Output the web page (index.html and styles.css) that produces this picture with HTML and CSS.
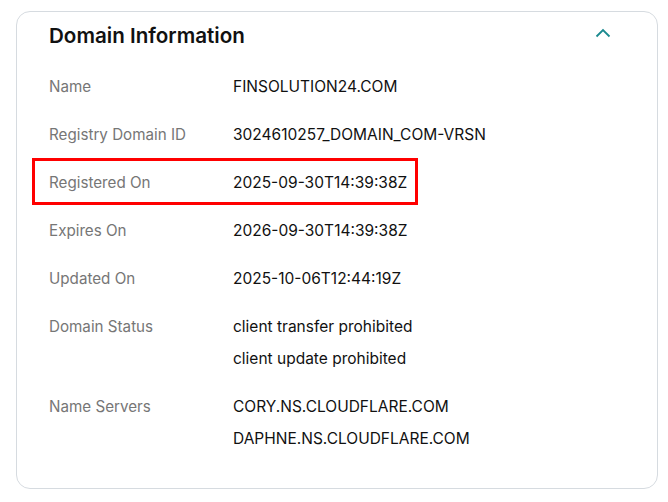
FILE: index.html
```html
<!DOCTYPE html>
<html>
<head>
<meta charset="utf-8">
<link rel="stylesheet" href="styles.css">
</head>
<body>
<div class="card">
  <div class="header">
    <h2 class="title">Domain Information</h2>
    <svg class="chev" width="16" height="10" viewBox="0 0 16 10"><path d="M1.5 8.5 L8 2 L14.5 8.5" fill="none" stroke="#1b8a8f" stroke-width="1.8"/></svg>
  </div>
  <div class="rows">
    <div class="row"><div class="label">Name</div><div class="vals"><div class="val">FINSOLUTION24.COM</div></div></div>
    <div class="row"><div class="label">Registry Domain ID</div><div class="vals"><div class="val">3024610257_DOMAIN_COM-VRSN</div></div></div>
    <div class="row hl"><div class="label">Registered On</div><div class="vals"><div class="val">2025-09-30T14:39:38Z</div></div></div>
    <div class="row"><div class="label">Expires On</div><div class="vals"><div class="val">2026-09-30T14:39:38Z</div></div></div>
    <div class="row"><div class="label">Updated On</div><div class="vals"><div class="val">2025-10-06T12:44:19Z</div></div></div>
    <div class="row"><div class="label">Domain Status</div><div class="vals"><div class="val">client transfer prohibited</div><div class="val">client update prohibited</div></div></div>
    <div class="row"><div class="label">Name Servers</div><div class="vals"><div class="val">CORY.NS.CLOUDFLARE.COM</div><div class="val">DAPHNE.NS.CLOUDFLARE.COM</div></div></div>
  </div>
</div>
</body>
</html>
```
FILE: styles.css
```css
html, body { margin: 0; padding: 0; background: #fff; }
body { font-family: Inter, "Liberation Sans", Arial, sans-serif; color: #111; }
.card {
  margin: 11px 10px 0 16px;
  height: 478px;
  box-sizing: border-box;
  border: 1px solid #d6dbe0;
  border-radius: 14px;
  padding: 0 0 0 15px;
}
.header {
  display: flex;
  align-items: center;
  justify-content: space-between;
  height: 46px;
  padding: 0 46px 0 17px;
}
.title { margin: 0; font-size: 20.6px; font-weight: 600; color: #111; }
.chev { display: block; margin-top: -4px; }
.rows { display: flex; flex-direction: column; gap: 10px; padding-top: 10px; }
.row {
  display: flex;
  width: 386px;
  box-sizing: border-box;
  padding: 0 0 0 14px;
  border: 3px solid transparent;
}
.row.hl { border-color: #f00; margin: -6px 0 -3px; padding-top: 2px; }
.label { width: 184px; flex: none; font-size: 15.2px; line-height: 32px; color: #767676; }
.vals { display: flex; flex-direction: column; }
.val { font-size: 15.5px; line-height: 32px; color: #111; white-space: nowrap; }
.row.hl .label, .row.hl .val { line-height: 39px; }
```
